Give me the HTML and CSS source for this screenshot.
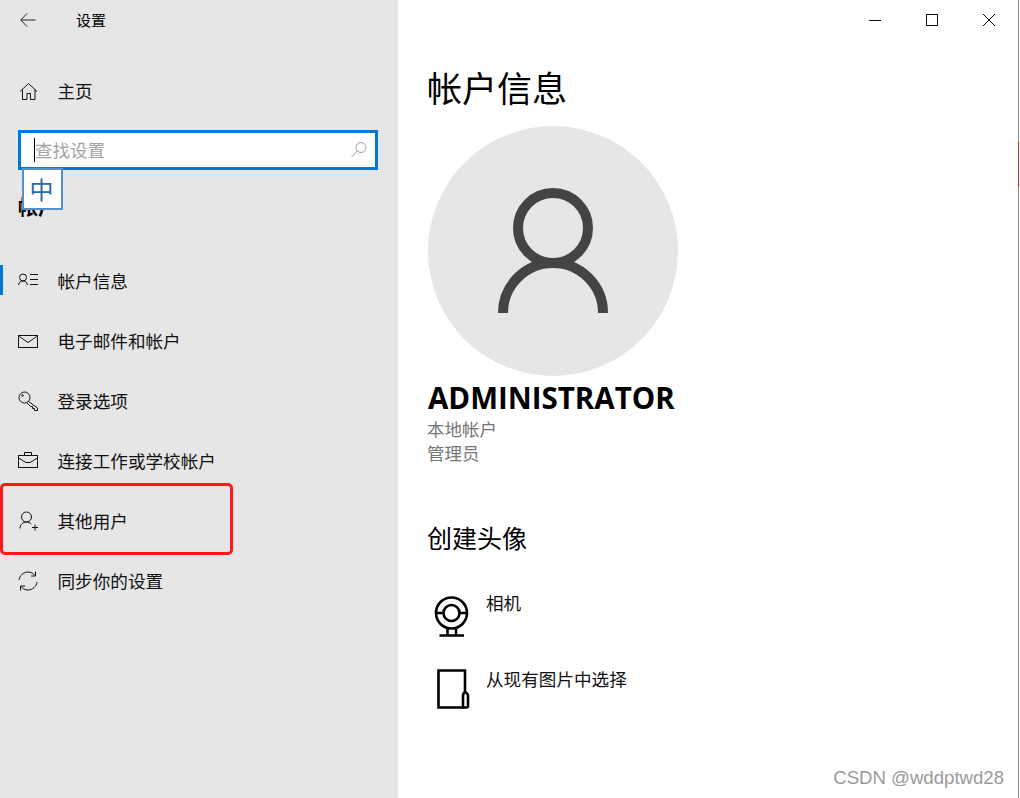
FILE: index.html
```html
<!DOCTYPE html>
<html lang="zh-CN">
<head>
    <meta charset="UTF-8">
    <title>设置</title>
    <link rel="stylesheet" href="styles.css">
</head>
<body>
    <div class="window">
        <aside class="sidebar">
            <div class="titlebar">
                <svg class="back-icon" width="16" height="14" viewBox="0 0 16 14"><path d="M7 .5 .8 7 7 13.500M.8 7H15.500"/></svg>
                <span class="app-title">设置</span>
            </div>
            <div class="nav-row home-row">
                <svg class="icon" viewBox="0 0 20 20"><path d="M2 10.500 10.500 2.500 19 10.500M4.500 8.500V18.500H9V12.500H12.500V18.500H17V8.500"/></svg>
                <span>主页</span>
            </div>
            <div class="search-box">
                <span class="caret"></span>
                <span class="search-hint">查找设置</span>
                <svg class="search-icon" width="18" height="18" viewBox="0 0 18 18"><circle cx="11" cy="6.500" r="5"/><path d="M7.500 10 1.500 16"/></svg>
            </div>
            <h2 class="group-title">帐户</h2>
            <nav class="nav-list">
                <div class="nav-row active">
                    <svg class="icon" viewBox="0 0 20 20"><circle cx="5" cy="6.500" r="3.500"/><path d="M.5 14C1 11 3 10 5 10s4 1 4.500 4M12 3.500H20M12 8.500H20M12 13.500H20"/></svg>
                    <span>帐户信息</span>
                </div>
                <div class="nav-row">
                    <svg class="icon" viewBox="0 0 20 20"><rect x=".5" y="4.500" width="19" height="12"/><path d="M.5 5 10 11.500 19.500 5"/></svg>
                    <span>电子邮件和帐户</span>
                </div>
                <div class="nav-row">
                    <svg class="icon" viewBox="0 0 20 20"><circle cx="6.500" cy="6.500" r="5.500"/><circle cx="4.500" cy="4.500" r=".8"/><path d="M10.500 10.500 19.500 17V19.500H16.500V17.500H14.500V15.500H12.500L9 12"/></svg>
                    <span>登录选项</span>
                </div>
                <div class="nav-row">
                    <svg class="icon" viewBox="0 0 20 20"><rect x=".5" y="4.500" width="19" height="12"/><path d="M.5 7 8 11.500H12L19.500 7M6.500 4.500V1.500H13.500V4.500"/></svg>
                    <span>连接工作或学校帐户</span>
                </div>
                <div class="nav-row">
                    <svg class="icon" viewBox="0 0 20 20"><circle cx="8.500" cy="6" r="5"/><path d="M2 17.500C2 13.500 5 11 8.500 11c2 0 3.500.7 4.800 2M14 16.500H20M17 13.500V19.500"/></svg>
                    <span>其他用户</span>
                </div>
                <div class="nav-row">
                    <svg class="icon" viewBox="0 0 20 20"><path d="M1 9C1.500 4.500 5.500 1 10 1c3 0 5.500 1.500 7 3.500M17.500 .5V5H13M19 11c-.5 4.500-4.500 8-9 8-3 0-5.500-1.500-7-3.500M2.500 19.500V15H7"/></svg>
                    <span>同步你的设置</span>
                </div>
            </nav>
        </aside>

        <main class="content">
            <div class="window-controls">
                <div class="control"><svg width="14" height="14" viewBox="0 0 14 14"><path d="M1 7.500H13"/></svg></div>
                <div class="control"><svg width="14" height="14" viewBox="0 0 14 14"><rect x="1.500" y="1.500" width="11" height="11"/></svg></div>
                <div class="control"><svg width="14" height="14" viewBox="0 0 14 14"><path d="M1 1 13 13M13 1 1 13"/></svg></div>
            </div>
            <h1 class="page-title">帐户信息</h1>
            <div class="avatar">
                <svg width="250" height="250" viewBox="0 0 250 250"><circle cx="125" cy="102" r="35"/><path d="M75 187A50 50 0 0 1 175 187"/></svg>
            </div>
            <div class="user-name">ADMINISTRATOR</div>
            <div class="user-meta">本地帐户</div>
            <div class="user-meta">管理员</div>
            <h2 class="section-title">创建头像</h2>
            <div class="option camera-option">
                <svg width="38" height="44" viewBox="0 0 38 44"><circle cx="18.500" cy="19" r="15.500"/><circle cx="18.500" cy="19" r="8"/><path d="M3 19H10.500M26.500 19H34M14.500 35V41M23 35V41M6.500 41.500H31"/></svg>
                <span>相机</span>
            </div>
            <div class="option picture-option">
                <svg width="38" height="44" viewBox="0 0 38 44"><path d="M30 41.500H5.500V4.500H32V27"/><path d="M30 41.500H33.500C34.500 41.500 35 41 35 40V30C35 28 33.500 26.500 32.500 26.500 31 26.500 30 28 30 30Z"/></svg>
                <span>从现有图片中选择</span>
            </div>
        </main>
    </div>

    <div class="ime-badge">中</div>
    <div class="red-mark"></div>
    <div class="edge-line"></div>
    <div class="edge-sliver"></div>
    <div class="watermark">CSDN @wddptwd28</div>
</body>
</html>
```

FILE: styles.css
```css
* {
    box-sizing: border-box;
}

html, body {
    margin: 0;
    height: 798px;
    overflow: hidden;
}

body {
    position: relative;
    background-color: #fff;
    color: #000;
    font-family: "Open Sans", "Noto Sans CJK SC", sans-serif;
}

svg {
    fill: none;
    stroke: #111;
    flex: none;
}

.window {
    display: flex;
    height: 798px;
}

.sidebar {
    width: 398px;
    flex: none;
    background-color: #e6e6e6;
}

.titlebar {
    height: 40px;
    display: flex;
    align-items: center;
    padding-left: 20px;
}

.back-icon {
    stroke: #222;
}

.app-title {
    margin: -2px 0 0 40px;
    font-size: 15px;
    font-family: "Noto Sans CJK SC", sans-serif;
}

.nav-row {
    position: relative;
    height: 60px;
    display: flex;
    align-items: center;
    gap: 19.5px;
    padding-left: 18px;
    font-size: 17.6px;
    color: #111;
    font-family: "Noto Sans CJK SC", sans-serif;
}

.nav-row span {
    margin-top: -2px;
}

.icon {
    width: 20px;
    height: 20px;
}

.home-row {
    margin-top: 21px;
}

.nav-row.active::before {
    content: "";
    position: absolute;
    left: 0;
    top: 14px;
    width: 3px;
    height: 30px;
    background-color: #0078d7;
}

.search-box {
    position: relative;
    margin: 9px 20px 0 18px;
    height: 40px;
    background-color: #fff;
    border: 3px solid #0078d7;
    display: flex;
    align-items: center;
    padding-left: 13px;
    font-size: 17.5px;
    font-family: "Noto Sans CJK SC", sans-serif;
}

.caret {
    width: 1px;
    height: 24px;
    background-color: #000;
}

.search-hint {
    flex: 1;
    margin-top: -2px;
    color: #a3a3a3;
}

.search-icon {
    stroke: #a0a0a0;
    margin-right: 7px;
}

.group-title {
    margin: 23px 0 0 18px;
    height: 58px;
    font-size: 20px;
    line-height: 28px;
    font-weight: 700;
    font-family: "Noto Sans CJK SC", sans-serif;
}

.content {
    flex: 1;
    padding-left: 30px;
}

.window-controls {
    height: 40px;
    display: flex;
    justify-content: flex-end;
    padding-right: 3px;
}

.control {
    width: 57px;
    display: flex;
    align-items: center;
    justify-content: center;
}

.page-title {
    margin: 24px 0 16px -1px;
    font-size: 35px;
    line-height: 46px;
    font-weight: 400;
    font-family: "Noto Sans CJK SC", sans-serif;
}

.avatar {
    width: 250px;
    height: 250px;
    border-radius: 50%;
    background-color: #e6e6e6;
}

.avatar svg {
    stroke: #444;
    stroke-width: 10;
}

.user-name {
    margin-top: 2px;
    font-size: 29.5px;
    line-height: 39px;
    font-weight: 700;
}

.user-meta {
    margin-left: -1px;
    font-size: 17.5px;
    line-height: 24px;
    color: #767676;
    font-family: "Noto Sans CJK SC", sans-serif;
}

.section-title {
    margin: 54px 0 0 -1px;
    font-size: 25px;
    line-height: 36px;
    font-weight: 400;
    font-family: "Noto Sans CJK SC", sans-serif;
}

.option {
    display: flex;
    gap: 15px;
    font-size: 17.6px;
    line-height: 26px;
    color: #111;
    font-family: "Noto Sans CJK SC", sans-serif;
}

.option svg {
    margin-left: 5px;
    stroke: #000;
    stroke-width: 2.6;
}

.camera-option {
    margin-top: 39px;
    height: 44px;
    align-items: flex-start;
}

.camera-option span {
    margin-top: -4px;
}

.picture-option {
    margin-top: 28px;
    height: 44px;
}

.ime-badge {
    position: absolute;
    left: 22px;
    top: 168px;
    width: 41px;
    height: 42px;
    padding-right: 2px;
    background-color: #fff;
    border: 2px solid #5590cb;
    color: #2a6aa8;
    font-size: 24px;
    line-height: 38px;
    text-align: center;
    font-family: "Noto Sans CJK SC", sans-serif;
}

.red-mark {
    position: absolute;
    left: 0;
    top: 483px;
    width: 233px;
    height: 72px;
    border: 3px solid #ff1a1a;
    border-radius: 5px;
}

.edge-line {
    position: absolute;
    left: 1018px;
    top: 0;
    width: 1px;
    height: 798px;
    background-color: #8a8a8a;
}

.edge-sliver {
    position: absolute;
    left: 1018px;
    top: 142px;
    width: 1px;
    height: 45px;
    background-color: #a8321f;
}

.watermark {
    position: absolute;
    right: 16px;
    top: 767px;
    font-size: 18.6px;
    line-height: 22px;
    color: #9a9a9a;
    font-family: "Liberation Sans", sans-serif;
}
```
